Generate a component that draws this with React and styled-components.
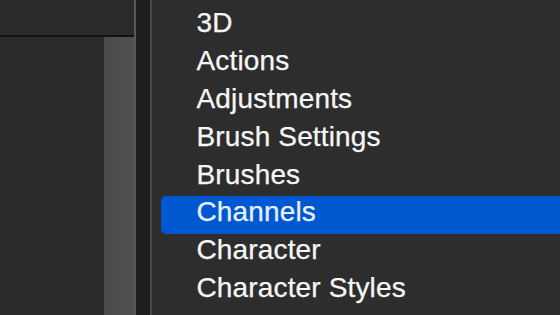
import React from "react";
import styled, { createGlobalStyle } from "styled-components";

const Global = createGlobalStyle`
  html, body { margin: 0; padding: 0; background: #2d2d2d; }
  body { width: 560px; height: 315px; overflow: hidden; }
`;

const Screen = styled.div`
  display: flex;
  width: 560px;
  height: 315px;
  overflow: hidden;
`;

const LeftPanel = styled.div`
  display: flex;
  flex-direction: column;
  width: 134px;
  background: #2a2a2a;
`;

const TopBar = styled.div`
  height: 35px;
  background: #2b2b2b;
  border-bottom: 2px solid #121212;
`;

const PanelBody = styled.div`
  flex: 1;
  display: flex;
`;

const PanelContent = styled.div`
  flex: 1;
  background: #2a2a2a;
`;

const ScrollTrack = styled.div`
  width: 30px;
  background: linear-gradient(90deg, #4b4b4b, #515151);
`;

const Rule = styled.div`
  width: ${(p) => p.$w}px;
  background: ${(p) => p.$c};
`;

const Gutter = styled.div`
  width: 14px;
  background: #1e1e1e;
`;

const Menu = styled.ul`
  flex: 1;
  margin: 0;
  list-style: none;
  background: #2d2d2d;
  padding: 7px 0 0 9px;
  display: flex;
  flex-direction: column;
  min-width: 0;
`;

const Item = styled.li`
  height: 37.8px;
  display: flex;
  align-items: center;
  box-sizing: border-box;
  padding: 0 0 5px 35.5px;
  margin-right: -12px;
  border-radius: 5px;
  white-space: nowrap;
  font-family: "Liberation Sans", Arial, sans-serif;
  font-size: 28px;
  letter-spacing: 0.15px;
  -webkit-text-stroke: 0.25px currentColor;
  color: ${(p) => (p.$selected ? "#eaf0fb" : "#f6f6f6")};
  background: ${(p) => (p.$selected ? "#0058d0" : "transparent")};
`;

const items = [
  "3D",
  "Actions",
  "Adjustments",
  "Brush Settings",
  "Brushes",
  "Channels",
  "Character",
  "Character Styles",
];

export default function App() {
  return (
    <>
      <Global />
      <Screen>
        <LeftPanel>
          <TopBar />
          <PanelBody>
            <PanelContent />
            <ScrollTrack />
          </PanelBody>
        </LeftPanel>
        <Rule $w={2} $c="#575757" />
        <Gutter />
        <Rule $w={2} $c="#4a4a4a" />
        <Menu>
          {items.map((t) => (
            <Item key={t} $selected={t === "Channels"}>
              {t}
            </Item>
          ))}
        </Menu>
      </Screen>
    </>
  );
}
